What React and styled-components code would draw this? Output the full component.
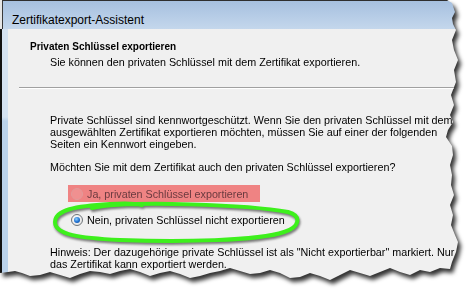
import React from 'react';
import styled, { createGlobalStyle } from 'styled-components';

const GlobalStyle = createGlobalStyle`
  html, body {
    margin: 0;
    padding: 0;
    background: #fff;
  }
  body {
    font-family: "Liberation Sans", Arial, sans-serif;
    color: #000;
  }
`;

const TORN = `polygon(
  0px 0px, 447px 0px, 452px 3px, 455px 12px, 452px 18px, 453px 24px, 456px 30px, 452px 40px,
  454px 50px, 458px 60px, 454px 70px, 456px 82px, 451px 95px, 454px 105px, 450px 115px,
  453px 122px, 448px 130px, 446px 137px, 452px 146px, 453px 155px, 450px 165px, 452px 175px,
  451px 185px, 454px 195px, 450px 205px, 453px 215px, 451px 225px, 455px 235px, 458px 242px,
  456px 252px, 452px 262px, 450px 269px, 440px 268px, 430px 272px, 420px 270px, 410px 275px,
  400px 272px, 390px 268px, 380px 272px, 370px 276px, 360px 273px, 350px 270px, 340px 275px,
  330px 280px, 320px 276px, 310px 273px, 300px 277px, 290px 278px, 280px 273px, 270px 270px,
  260px 273px, 250px 274px, 240px 271px, 230px 268px, 220px 271px, 210px 273px, 200px 276px,
  190px 278px, 180px 274px, 170px 271px, 160px 273px, 150px 276px, 140px 272px, 130px 269px,
  120px 271px, 110px 274px, 100px 272px, 90px 271px, 80px 274px, 70px 278px, 60px 275px,
  50px 272px, 40px 275px, 30px 276px, 22px 273px, 15px 271px, 8px 272px, 0px 273px
)`;

const Stage = styled.div`
  width: 476px;
  height: 299px;
  overflow: hidden;
  background: #fff;
`;

const Shadow = styled.div`
  width: 476px;
  height: 299px;
  filter: drop-shadow(3px 4px 2px rgba(0, 0, 0, 0.8));
`;

const Sheet = styled.div`
  position: relative;
  display: flex;
  width: 476px;
  height: 299px;
  clip-path: ${TORN};
`;

const BehindEdge = styled.div`
  width: 2px;
  flex: none;
  background: linear-gradient(to bottom, #e6e6e6 0 29px, #111 29px);
`;

const Window = styled.div`
  flex: 1;
  display: flex;
  flex-direction: column;
  min-width: 0;
`;

const TitleBar = styled.div`
  height: 29px;
  box-sizing: border-box;
  flex: none;
  padding: 12px 0 0 9px;
  line-height: 14px;
  border-top: 1px solid #2e2e2e;
  border-left: 1px solid #3a3a3a;
  background: linear-gradient(to bottom, #a6c0df, #c4d7ec);
  font-size: 12px;
  color: #000;
  white-space: nowrap;
`;

const Body = styled.div`
  flex: 1;
  display: flex;
`;

const Frame = styled.div`
  width: 6px;
  flex: none;
  background: linear-gradient(to bottom, #d4e2f1 0 88px, #bad2ea 92px);
`;

const Content = styled.div`
  flex: 1;
  background: #f0f0f0;
  font-size: 10.75px;
  white-space: nowrap;
  overflow: hidden;
`;

const Header = styled.div`
  padding: 12px 0 0 22px;
`;

const HeaderTitle = styled.div`
  font-weight: 700;
  font-size: 10px;
  line-height: 12px;
`;

const HeaderText = styled.div`
  margin-top: 3px;
  padding-left: 20px;
  line-height: 12px;
`;

const Separator = styled.div`
  margin: 19px 0 0 11px;
  border-top: 1px solid #a0a0a0;
  border-bottom: 1px solid #fff;
`;

const Main = styled.div`
  padding-left: 42px;
`;

const Para = styled.p`
  margin: ${(p) => p.$top}px 0 0;
  line-height: 11.8px;
`;

const Option = styled.label`
  display: flex;
  align-items: center;
  gap: 4px;
  width: 192px;
  height: 17px;
  margin: ${(p) => p.$top}px 0 0 60px;
  padding-left: 3px;
  box-sizing: border-box;
  background: ${(p) => (p.$flag ? '#ef8383' : 'transparent')};
  color: ${(p) => (p.$disabled ? '#6a3a3f' : '#000')};
`;

const Radio = styled.span`
  width: 12px;
  height: 12px;
  flex: none;
  border-radius: 50%;
  box-sizing: border-box;
  display: flex;
  align-items: center;
  justify-content: center;
  border: 1px solid ${(p) => (p.$disabled ? '#e29a9a' : '#6e7378')};
  background: ${(p) =>
    p.$disabled ? '#f09090' : 'radial-gradient(circle at 40% 35%, #ffffff, #dcdcdc)'};

  &::after {
    content: '';
    display: ${(p) => (p.$checked ? 'block' : 'none')};
    width: 6px;
    height: 6px;
    border-radius: 50%;
    background: radial-gradient(circle at 40% 35%, #8fd0ff, #1c6fd0 55%, #0b3f8e);
  }
`;

const Marker = styled.svg`
  position: absolute;
  left: 0;
  top: 0;
  width: 476px;
  height: 299px;
  pointer-events: none;
  filter: drop-shadow(1px 2px 1px rgba(40, 40, 40, 0.6));
`;

export default function App() {
  return (
    <Stage>
      <GlobalStyle />
      <Shadow>
        <Sheet>
          <BehindEdge />
          <Window>
            <TitleBar>Zertifikatexport-Assistent</TitleBar>
            <Body>
              <Frame />
              <Content>
                <Header>
                  <HeaderTitle>Privaten Schlüssel exportieren</HeaderTitle>
                  <HeaderText>Sie können den privaten Schlüssel mit dem Zertifikat exportieren.</HeaderText>
                </Header>
                <Separator />
                <Main>
                  <Para $top={26}>
                    Private Schlüssel sind kennwortgeschützt. Wenn Sie den privaten Schlüssel mit dem
                    <br />
                    ausgewählten Zertifikat exportieren möchten, müssen Sie auf einer der folgenden
                    <br />
                    Seiten ein Kennwort eingeben.
                  </Para>
                  <Para $top={12}>Möchten Sie mit dem Zertifikat auch den privaten Schlüssel exportieren?</Para>
                </Main>
                <Option $top={11} $flag $disabled>
                  <Radio $disabled />
                  Ja, privaten Schlüssel exportieren
                </Option>
                <Option $top={9}>
                  <Radio $checked />
                  Nein, privaten Schlüssel nicht exportieren
                </Option>
                <Main>
                  <Para $top={19}>
                    Hinweis: Der dazugehörige private Schlüssel ist als "Nicht exportierbar" markiert. Nur
                    <br />
                    das Zertifikat kann exportiert werden.
                  </Para>
                </Main>
              </Content>
            </Body>
          </Window>
          <Marker viewBox="0 0 476 299">
            <path
              d="M 92 208 C 130 200, 250 205, 288 212 C 302 216, 300 227, 284 232 C 258 241, 180 242, 120 240 C 80 238, 55 235, 55 222 C 55 210, 75 206, 110 204 C 124 203, 134 203, 142 205"
              fill="none"
              stroke="#3df01c"
              strokeWidth="4"
              strokeLinecap="round"
              strokeLinejoin="round"
            />
          </Marker>
        </Sheet>
      </Shadow>
    </Stage>
  );
}
